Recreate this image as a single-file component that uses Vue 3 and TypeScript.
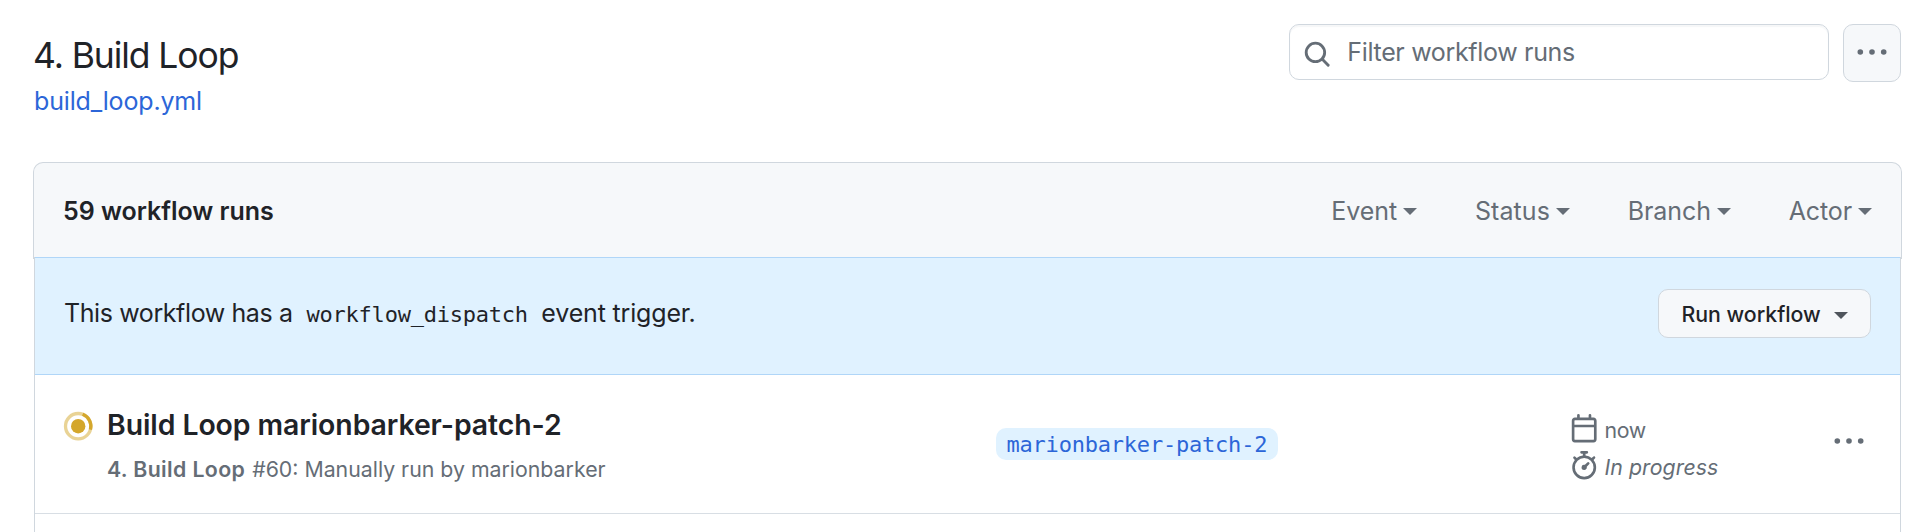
<script setup lang="ts">
interface Filter {
  label: string
  key: string
}

const filters: Filter[] = [
  { label: 'Event', key: 'event' },
  { label: 'Status', key: 'status' },
  { label: 'Branch', key: 'branch' },
  { label: 'Actor', key: 'actor' },
]

const run = {
  title: 'Build Loop marionbarker-patch-2',
  workflow: '4. Build Loop',
  detail: '#60: Manually run by marionbarker',
  branch: 'marionbarker-patch-2',
  started: 'now',
  state: 'In progress',
}
</script>

<template>
  <main class="page">
    <header class="head">
      <div class="heading">
        <h1>4. Build Loop</h1>
        <a class="file">build_loop.yml</a>
      </div>
      <div class="tools">
        <div class="search">
          <svg class="icon" viewBox="0 0 16 16">
            <g fill="none" stroke="currentColor" stroke-width="1.6" stroke-linecap="round">
              <circle cx="7" cy="7" r="5.2" />
              <path d="M10.9 10.9 14.2 14.2" />
            </g>
          </svg>
          <span>Filter workflow runs</span>
        </div>
        <button class="more">
          <svg class="dots" viewBox="0 0 30 8">
            <circle cx="3.3" cy="4" r="2.8" /><circle cx="15" cy="4" r="2.8" /><circle cx="26.7" cy="4" r="2.8" />
          </svg>
        </button>
      </div>
    </header>

    <section class="table">
      <div class="table-head">
        <strong>59 workflow runs</strong>
        <nav class="filters">
          <span v-for="f in filters" :key="f.key" class="filter">
            <span :class="f.key">{{ f.label }}</span><i class="caret"></i>
          </span>
        </nav>
      </div>
      <div class="table-body">
        <div class="dispatch">
          <p><span class="lead">This workflow has a</span><code>workflow_dispatch</code><span class="tail">event trigger.</span></p>
          <button class="run-btn">Run workflow<i class="caret"></i></button>
        </div>
        <article class="run">
          <svg class="icon status-icon" viewBox="0 0 16 16">
            <circle cx="8" cy="8" r="4.05" fill="#d4a72c" />
            <g fill="none" stroke="#d4a72c" stroke-width="1.85">
              <circle cx="8" cy="8" r="7.15" opacity=".5" />
              <path d="M10.5 1.3A7.15 7.15 0 0 1 14.9 9.9" />
            </g>
          </svg>
          <div class="summary">
            <h2>{{ run.title }}</h2>
            <p><b>{{ run.workflow }}</b><span>{{ run.detail }}</span></p>
          </div>
          <div class="branch-cell"><span class="pill">{{ run.branch }}</span></div>
          <div class="meta">
            <div>
              <svg class="icon" viewBox="0 0 16 16"><path fill="currentColor" d="M4.75 0a.75.75 0 0 1 .75.75V2h5V.75a.75.75 0 0 1 1.5 0V2h1.25c.966 0 1.75.784 1.75 1.75v10.5A1.75 1.75 0 0 1 13.25 16H2.75A1.75 1.75 0 0 1 1 14.25V3.75C1 2.784 1.784 2 2.75 2H4V.75A.75.75 0 0 1 4.75 0ZM2.5 7.5v6.75c0 .138.112.25.25.25h10.5a.25.25 0 0 0 .25-.25V7.5Zm10.75-4H2.75a.25.25 0 0 0-.25.25V6h11V3.75a.25.25 0 0 0-.25-.25Z" /></svg>
              <span class="now">{{ run.started }}</span>
            </div>
            <div>
              <svg class="icon" viewBox="0 0 16 16"><path fill="currentColor" d="M5.75.75A.75.75 0 0 1 6.5 0h3a.75.75 0 0 1 0 1.5h-.75v1l-.001.041a6.724 6.724 0 0 1 3.464 1.435l.007-.006.75-.75a.749.749 0 0 1 1.275.326.749.749 0 0 1-.215.734l-.75.75-.006.007a6.75 6.75 0 1 1-10.548 0L2.72 5.03l-.75-.75a.751.751 0 0 1 .018-1.042.751.751 0 0 1 1.042-.018l.75.75.007.006A6.72 6.72 0 0 1 7.25 2.541V1.5H6.5a.75.75 0 0 1-.75-.75ZM8 14.5a5.25 5.25 0 1 0-.001-10.501A5.25 5.25 0 0 0 8 14.5Zm.389-6.7 1.33-1.33a.75.75 0 1 1 1.061 1.06L9.45 8.861A1.503 1.503 0 0 1 8 10.75a1.499 1.499 0 1 1 .389-2.95Z" /></svg>
              <em>{{ run.state }}</em>
            </div>
          </div>
          <svg class="dots" viewBox="0 0 30 8">
            <circle cx="3.3" cy="4" r="2.8" /><circle cx="15" cy="4" r="2.8" /><circle cx="26.7" cy="4" r="2.8" />
          </svg>
        </article>
      </div>
    </section>
  </main>
</template>

<style>
body {
  margin: 0;
  background: #fff;
}
</style>

<style scoped>
* {
  box-sizing: border-box;
}
.page {
  height: 532px;
  overflow: hidden;
  display: flex;
  flex-direction: column;
  padding: 0 14px 0 33px;
  font: 25px/36px Inter, "Liberation Sans", sans-serif;
  color: #1f2328;
}
h1, h2, p {
  margin: 0;
  font-weight: 400;
}
.icon {
  width: 28.4px;
  height: 28.4px;
  flex: none;
  overflow: visible;
}
.dots {
  width: 30px;
  height: 8px;
  flex: none;
  fill: #656d76;
}
.head {
  height: 162px;
  flex: none;
  display: flex;
  justify-content: space-between;
  align-items: flex-start;
}
.heading {
  padding-top: 32px;
}
h1 {
  font-size: 35.5px;
  line-height: 48px;
  letter-spacing: -1.08px;
}
.file {
  display: block;
  margin: 3px 0 0 1px;
  color: #2c66d8;
  letter-spacing: -0.17px;
}
.tools {
  display: flex;
  gap: 14px;
  padding: 24px 1px 0 0;
}
.search {
  width: 540px;
  height: 56px;
  display: flex;
  align-items: center;
  padding-left: 13.3px;
  gap: 15.6px;
  border: 1px solid #d0d7de;
  border-radius: 10px;
  box-shadow: inset 0 2px 1px rgba(208, 215, 222, 0.2);
  color: #656d76;
  letter-spacing: -0.33px;
}
.search .icon {
  margin-top: 5px;
}
button {
  font: inherit;
  color: inherit;
  background: #f6f8fa;
  border: 1px solid #d0d7de;
  border-radius: 10px;
  padding: 0;
  display: flex;
  align-items: center;
}
.more {
  width: 58px;
  height: 58px;
  justify-content: center;
  padding-bottom: 3px;
}
.table-head {
  height: 97px;
  display: flex;
  justify-content: space-between;
  align-items: center;
  padding: 0 29px 1px 29px;
  background: #f6f8fa;
  border: 1px solid #d0d7de;
  border-bottom: 0;
  border-radius: 10px 10px 0 0;
}
.table-head strong {
  font-weight: 600;
  letter-spacing: -0.02px;
}
.filters {
  display: flex;
  gap: 57.8px;
  color: #656d76;
}
.filter {
  display: flex;
  align-items: center;
  gap: 6px;
}
.caret {
  border: 7px solid transparent;
  border-top-color: currentColor;
  border-bottom: 0;
  margin-top: 2px;
}
.event { letter-spacing: -0.05px; }
.status { letter-spacing: 0.08px; }
.branch { letter-spacing: -0.08px; }
.actor { letter-spacing: -0.12px; }
.table-body {
  position: relative;
  height: 400px;
  margin: -2px 1px 0;
  border: 1px solid #d0d7de;
  border-width: 0 1px;
  background: #fff;
}
.dispatch {
  height: 118px;
  display: flex;
  justify-content: space-between;
  align-items: center;
  padding: 0 29px 5px 29px;
  background: #e0f2ff;
  border: 1px solid #b0d6f8;
  border-width: 1px 0;
}
.dispatch p {
  display: flex;
  align-items: baseline;
}
.lead { letter-spacing: -0.4px; }
code {
  margin: 0 13.5px 0 14px;
  font: 22px/36px "DejaVu Sans Mono", monospace;
  letter-spacing: -0.23px;
}
.tail { letter-spacing: -0.16px; }
.run-btn {
  width: 213px;
  height: 49px;
  padding-left: 22.4px;
  font-size: 21.3px;
  font-weight: 500;
}
.run-btn .caret {
  margin: 3px 0 0 13px;
  color: #4f555c;
}
.run {
  height: 139px;
  display: grid;
  grid-template-columns: 43px 889px 574px 264px 30px;
  align-items: start;
  padding-left: 29px;
  border-bottom: 1px solid #d8dee4;
}
.status-icon {
  margin-top: 37px;
}
.summary {
  padding-top: 30px;
}
h2 {
  font-size: 28.4px;
  line-height: 40px;
  font-weight: 600;
  letter-spacing: -0.07px;
}
.summary p {
  margin: 9px 0 0 0;
  display: flex;
  gap: 7px;
  font-size: 21.3px;
  line-height: 30px;
  color: #656d76;
}
.summary b {
  font-weight: 600;
  letter-spacing: 0.37px;
}
.branch-cell {
  padding-top: 53px;
}
.pill {
  display: block;
  width: 282px;
  height: 32px;
  padding-left: 10.5px;
  border-radius: 10px;
  background: #e0f2ff;
  color: #2c66d8;
  font: 22px/33px "DejaVu Sans Mono", monospace;
  letter-spacing: -0.21px;
}
.meta {
  padding-top: 35px;
  font-size: 21.3px;
  color: #656d76;
}
.meta div {
  height: 37px;
  display: flex;
  align-items: center;
  gap: 6px;
}
.meta span, .meta em {
  padding-top: 2px;
}
.meta em { letter-spacing: 0.07px; }
.now { letter-spacing: -0.3px; }
.run > .dots {
  margin-top: 62px;
}
</style>
